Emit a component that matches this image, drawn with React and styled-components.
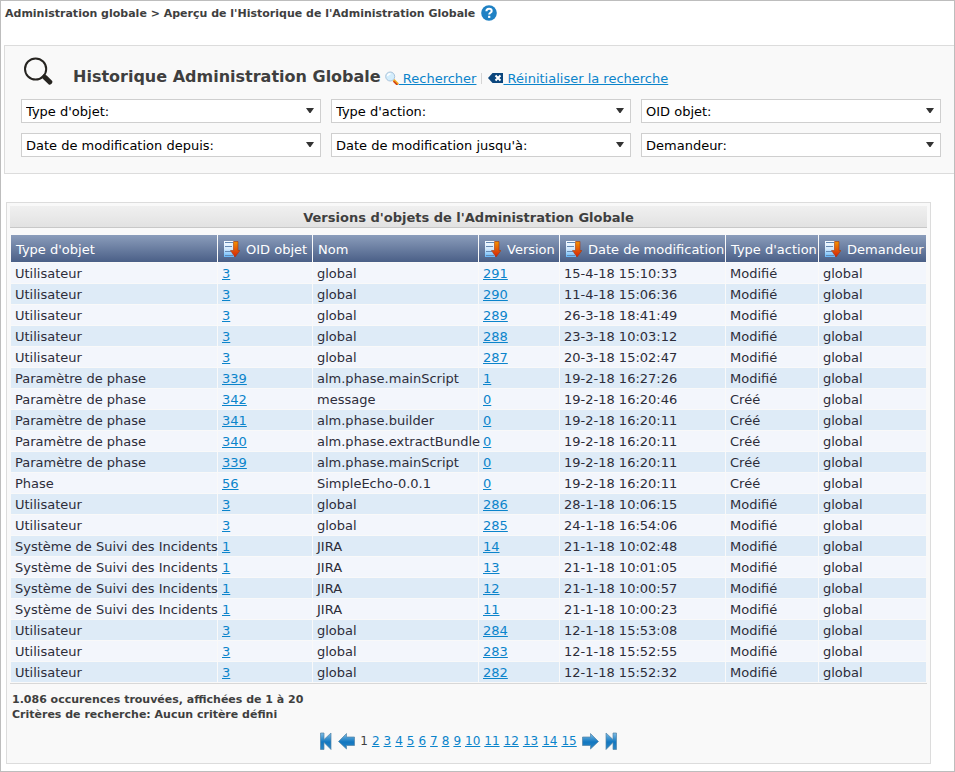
import React from "react";
import styled, { createGlobalStyle } from "styled-components";

const GlobalStyle = createGlobalStyle`
  *, *::before, *::after { box-sizing: border-box; }
  body {
    margin: 0;
    background: #fff;
    color: #3f3f3f;
    font-family: Verdana, "DejaVu Sans", sans-serif;
    font-size: 13px;
  }
`;

const Frame = styled.div`
  min-height: 100vh;
  border: 1px solid #bdbdbd;
  padding: 4px 0 7px 3px;
`;

const Breadcrumb = styled.header`
  display: flex;
  align-items: center;
  gap: 6px;
  height: 16px;
  padding-left: 1px;
  font-size: 11px;
  font-weight: bold;
`;

const IconButton = styled.button`
  display: flex;
  padding: 0;
  border: 0;
  background: none;
  cursor: pointer;
`;

const Link = styled.a`
  color: #0b84cb;
  text-decoration: underline;
`;

const SearchPanel = styled.section`
  margin-top: 24px;
  padding: 8px 13px 16px 16px;
  border: 1px solid #dcdcdc;
  border-right: 0;
  background: #f9f9f9;
`;

const SearchHeader = styled.div`
  display: flex;
  height: 45px;
  gap: 18px;
`;

const SearchTitleRow = styled.div`
  display: flex;
  align-items: center;
  padding-top: 12px;
  height: 34px;
  white-space: nowrap;
`;

const SearchTitle = styled.h1`
  margin: 0 4px 0 0;
  font-size: 16px;
  line-height: 22px;
`;

const ActionLink = styled(Link)`
  display: flex;
  align-items: center;
  padding-top: 2px;
`;

const Divider = styled.span`
  width: 1px;
  height: 11px;
  margin: 2px 6px 0 5px;
  background: #d5d5d5;
`;

const Filters = styled.div`
  display: grid;
  grid-template-columns: repeat(3, 1fr);
  gap: 10px;
`;

const FilterField = styled.div`
  display: grid;
  align-items: center;

  > * { grid-area: 1 / 1; }
  > svg { justify-self: end; margin: 0 7px 2px 0; pointer-events: none; }
`;

const FilterSelect = styled.select`
  width: 100%;
  height: 24px;
  padding: 0 20px 0 4px;
  appearance: none;
  border: 1px solid #cfcfcf;
  border-radius: 0;
  background: #fff;
  color: #000;
  font: inherit;
`;

const ResultsPanel = styled.section`
  margin: 28px 23px 0 2px;
  padding: 3px;
  border: 1px solid #dcdcdc;
  background: #f9f9f9;
`;

const ResultsTitle = styled.h2`
  margin: 0 0 6px;
  height: 22px;
  padding-top: 1px;
  border-bottom: 1px solid #c8c8c8;
  background: linear-gradient(#f0f0f0, #e2e2e2);
  font-size: 13px;
  line-height: 22px;
  text-align: center;
`;

const Table = styled.table`
  width: 100%;
  table-layout: fixed;
  border-spacing: 1px;
  border-bottom: 1px solid #d8d8d8;
`;

const Column = styled.col`
  width: ${(p) => p.$width}px;
`;

const HeadCell = styled.th`
  height: 27px;
  padding: 0 5px;
  background: linear-gradient(#8b9dbb, #4a5f87);
  color: #fff;
  font-weight: normal;
  text-align: left;
  white-space: nowrap;
`;

const HeadContent = styled.div`
  display: flex;
  align-items: center;
  gap: 6px;
  padding-top: 1px;
`;

const Row = styled.tr`
  background: ${(p) => (p.$shaded ? "#deebf7" : "#f3f6fc")};
`;

const Cell = styled.td`
  height: 20px;
  padding: 1px 4px 0;
  color: #2d2d3a;
  line-height: 19px;
  white-space: nowrap;
`;

const Summary = styled.p`
  margin: 8px 2px 0;
  font-size: 11px;
  font-weight: bold;
  line-height: 15px;
`;

const Pagination = styled.nav`
  display: flex;
  align-items: center;
  justify-content: center;
  gap: 4px;
  height: 16px;
  margin: 11px 0 11px;
  font-size: 12px;
`;

const PagerButton = styled(IconButton)`
  padding: 0 1px;
`;

const MagnifierIcon = () => (
  <svg width="34" height="34" viewBox="0 0 34 34" aria-hidden="true">
    <circle cx="14.600" cy="15" r="10.600" fill="none" stroke="#262420" strokeWidth="2" />
    <path d="M20.500 22.500l2.200-2.200 3 1.200 5.300 5.300c1.500 1.500-1.300 5-3.200 3.700l-6-5.700z" fill="#262420" />
  </svg>
);

const HelpIcon = () => (
  <svg width="16" height="16" viewBox="0 0 16 16" aria-hidden="true">
    <circle cx="8" cy="8" r="7.800" fill="#1f81c4" />
    <path d="M5.400 6.200C5.400 4.600 6.500 3.700 8 3.700s2.700.900 2.700 2.200c0 1.900-2.500 1.900-2.500 3.600" fill="none" stroke="#fff" strokeWidth="2" />
    <rect x="7.100" y="10.800" width="2.200" height="2.100" fill="#fff" />
  </svg>
);

const SearchIcon = () => (
  <svg width="14" height="14" viewBox="0 0 14 14" aria-hidden="true">
    <path d="M8.500 9l4.500 4.500" stroke="#f0a81e" strokeWidth="2.600" />
    <path d="M8.500 10.200l3.800 3.800" stroke="#cf3a14" strokeWidth="1.500" />
    <circle cx="5.200" cy="5.500" r="4.500" fill="#d3edfc" stroke="#a9c3da" />
    <path d="M2.500 5.200c.3-1.700 1.500-2.500 3-2.500" stroke="#fff" strokeWidth="1.400" fill="none" />
  </svg>
);

const ResetIcon = () => (
  <svg width="15" height="10" viewBox="0 0 15 10" aria-hidden="true">
    <path d="M0 5l4.500-5H15v10H4.500z" fill="#0b467d" />
    <path d="M7.500 2.500l5 5m0-5l-5 5" stroke="#fff" strokeWidth="2" />
  </svg>
);

const CaretIcon = () => (
  <svg width="8" height="5" viewBox="0 0 8 5" aria-hidden="true">
    <path d="M0 0h8L4.500 5h-1z" fill="#333" />
  </svg>
);

const SortIcon = () => (
  <svg width="17" height="17" viewBox="0 0 17 17" aria-hidden="true">
    <defs>
      <linearGradient id="sheet" x2="0" y2="1">
        <stop stopColor="#f8fbff" />
        <stop offset=".5" stopColor="#d3e9fd" />
        <stop offset="1" stopColor="#62b8fa" />
      </linearGradient>
      <linearGradient id="sortArrow" x2="0" y2="1">
        <stop stopColor="#f39200" />
        <stop offset="1" stopColor="#d42008" />
      </linearGradient>
    </defs>
    <path d="M1 0h10v16H1z" fill="url(#sheet)" />
    <path d="M2 1.500h8M2 5.500h7M2 10.500h6M2 14.500h8" stroke="#6489b5" />
    <path d="M10.500.5H15v9h2l-5 6.500-4.500-6.500h3z" fill="url(#sortArrow)" stroke="#a53a10" strokeWidth=".6" />
  </svg>
);

const PagerGradient = () => (
  <defs>
    <linearGradient id="pager" x2="0" y2="1">
      <stop stopColor="#7dbde6" />
      <stop offset=".55" stopColor="#1277c0" />
      <stop offset="1" stopColor="#2c86c4" />
    </linearGradient>
  </defs>
);

const PagerSvg = styled.svg`
  transform: ${(p) => (p.$flip ? "scaleX(-1)" : "none")};
`;

const EndIcon = ({ flip }) => (
  <PagerSvg $flip={flip} width="12" height="18" viewBox="0 0 12 18" aria-hidden="true">
    <PagerGradient />
    <path d="M.5 1h3.500v6.500L11 1v16.500L4 10.500v7H.5z" fill="url(#pager)" stroke="#5484a6" strokeWidth=".7" />
  </PagerSvg>
);

const StepIcon = ({ flip }) => (
  <PagerSvg $flip={flip} width="17" height="18" viewBox="0 0 17 18" aria-hidden="true">
    <PagerGradient />
    <path d="M.5 9.500L8.500 1.500V5h8v8.500h-8V17z" fill="url(#pager)" stroke="#5484a6" strokeWidth=".7" />
  </PagerSvg>
);

const filters = [
  "Type d'objet:",
  "Type d'action:",
  "OID objet:",
  "Date de modification depuis:",
  "Date de modification jusqu'à:",
  "Demandeur:",
];

const columns = [
  { label: "Type d'objet", width: 206 },
  { label: "OID objet", width: 94, sortable: true },
  { label: "Nom", width: 165 },
  { label: "Version", width: 80, sortable: true },
  { label: "Date de modification", width: 165, sortable: true },
  { label: "Type d'action", width: 92 },
  { label: "Demandeur", width: 107, sortable: true },
];

const user = "Utilisateur";
const param = "Paramètre de phase";
const tracker = "Système de Suivi des Incidents";

const versions = [
  [user, 3, "global", 291, "15-4-18 15:10:33", "Modifié"],
  [user, 3, "global", 290, "11-4-18 15:06:36", "Modifié"],
  [user, 3, "global", 289, "26-3-18 18:41:49", "Modifié"],
  [user, 3, "global", 288, "23-3-18 10:03:12", "Modifié"],
  [user, 3, "global", 287, "20-3-18 15:02:47", "Modifié"],
  [param, 339, "alm.phase.mainScript", 1, "19-2-18 16:27:26", "Modifié"],
  [param, 342, "message", 0, "19-2-18 16:20:46", "Créé"],
  [param, 341, "alm.phase.builder", 0, "19-2-18 16:20:11", "Créé"],
  [param, 340, "alm.phase.extractBundle", 0, "19-2-18 16:20:11", "Créé"],
  [param, 339, "alm.phase.mainScript", 0, "19-2-18 16:20:11", "Créé"],
  ["Phase", 56, "SimpleEcho-0.0.1", 0, "19-2-18 16:20:11", "Créé"],
  [user, 3, "global", 286, "28-1-18 10:06:15", "Modifié"],
  [user, 3, "global", 285, "24-1-18 16:54:06", "Modifié"],
  [tracker, 1, "JIRA", 14, "21-1-18 10:02:48", "Modifié"],
  [tracker, 1, "JIRA", 13, "21-1-18 10:01:05", "Modifié"],
  [tracker, 1, "JIRA", 12, "21-1-18 10:00:57", "Modifié"],
  [tracker, 1, "JIRA", 11, "21-1-18 10:00:23", "Modifié"],
  [user, 3, "global", 284, "12-1-18 15:53:08", "Modifié"],
  [user, 3, "global", 283, "12-1-18 15:52:55", "Modifié"],
  [user, 3, "global", 282, "12-1-18 15:52:32", "Modifié"],
];

const pages = Array.from({ length: 14 }, (_, i) => i + 2);

export default function App() {
  return (
    <>
      <GlobalStyle />
      <Frame>
        <Breadcrumb>
          <span>Administration globale &gt; Aperçu de l'Historique de l'Administration Globale</span>
          <IconButton aria-label="Aide"><HelpIcon /></IconButton>
        </Breadcrumb>

        <SearchPanel>
          <SearchHeader>
            <MagnifierIcon />
            <SearchTitleRow>
              <SearchTitle>Historique Administration Globale</SearchTitle>
              <ActionLink href="#rechercher"><SearchIcon />&nbsp;Rechercher</ActionLink>
              <Divider />
              <ActionLink href="#reinitialiser"><ResetIcon />&nbsp;Réinitialiser la recherche</ActionLink>
            </SearchTitleRow>
          </SearchHeader>
          <Filters>
            {filters.map((label) => (
              <FilterField key={label}>
                <FilterSelect aria-label={label}><option>{label}</option></FilterSelect>
                <CaretIcon />
              </FilterField>
            ))}
          </Filters>
        </SearchPanel>

        <ResultsPanel>
          <ResultsTitle>Versions d'objets de l'Administration Globale</ResultsTitle>
          <Table>
            <colgroup>
              {columns.map((c) => <Column key={c.label} $width={c.width} />)}
            </colgroup>
            <thead>
              <tr>
                {columns.map((c) => (
                  <HeadCell key={c.label} scope="col">
                    <HeadContent>
                      {c.sortable && <IconButton aria-label={`Trier par ${c.label}`}><SortIcon /></IconButton>}
                      {c.label}
                    </HeadContent>
                  </HeadCell>
                ))}
              </tr>
            </thead>
            <tbody>
              {versions.map(([type, oid, name, version, date, action], i) => (
                <Row key={i} $shaded={i % 2 === 1}>
                  <Cell>{type}</Cell>
                  <Cell><Link href="#objet">{oid}</Link></Cell>
                  <Cell>{name}</Cell>
                  <Cell><Link href="#version">{version}</Link></Cell>
                  <Cell>{date}</Cell>
                  <Cell>{action}</Cell>
                  <Cell>global</Cell>
                </Row>
              ))}
            </tbody>
          </Table>
          <Summary>
            1.086 occurences trouvées, affichées de 1 à 20
            <br />
            Critères de recherche: Aucun critère défini
          </Summary>
          <Pagination aria-label="Pages">
            <PagerButton aria-label="Première page"><EndIcon /></PagerButton>
            <PagerButton aria-label="Page précédente"><StepIcon /></PagerButton>
            <span aria-current="page">1</span>
            {pages.map((page) => <Link key={page} href={`#page-${page}`}>{page}</Link>)}
            <PagerButton aria-label="Page suivante"><StepIcon flip /></PagerButton>
            <PagerButton aria-label="Dernière page"><EndIcon flip /></PagerButton>
          </Pagination>
        </ResultsPanel>
      </Frame>
    </>
  );
}
